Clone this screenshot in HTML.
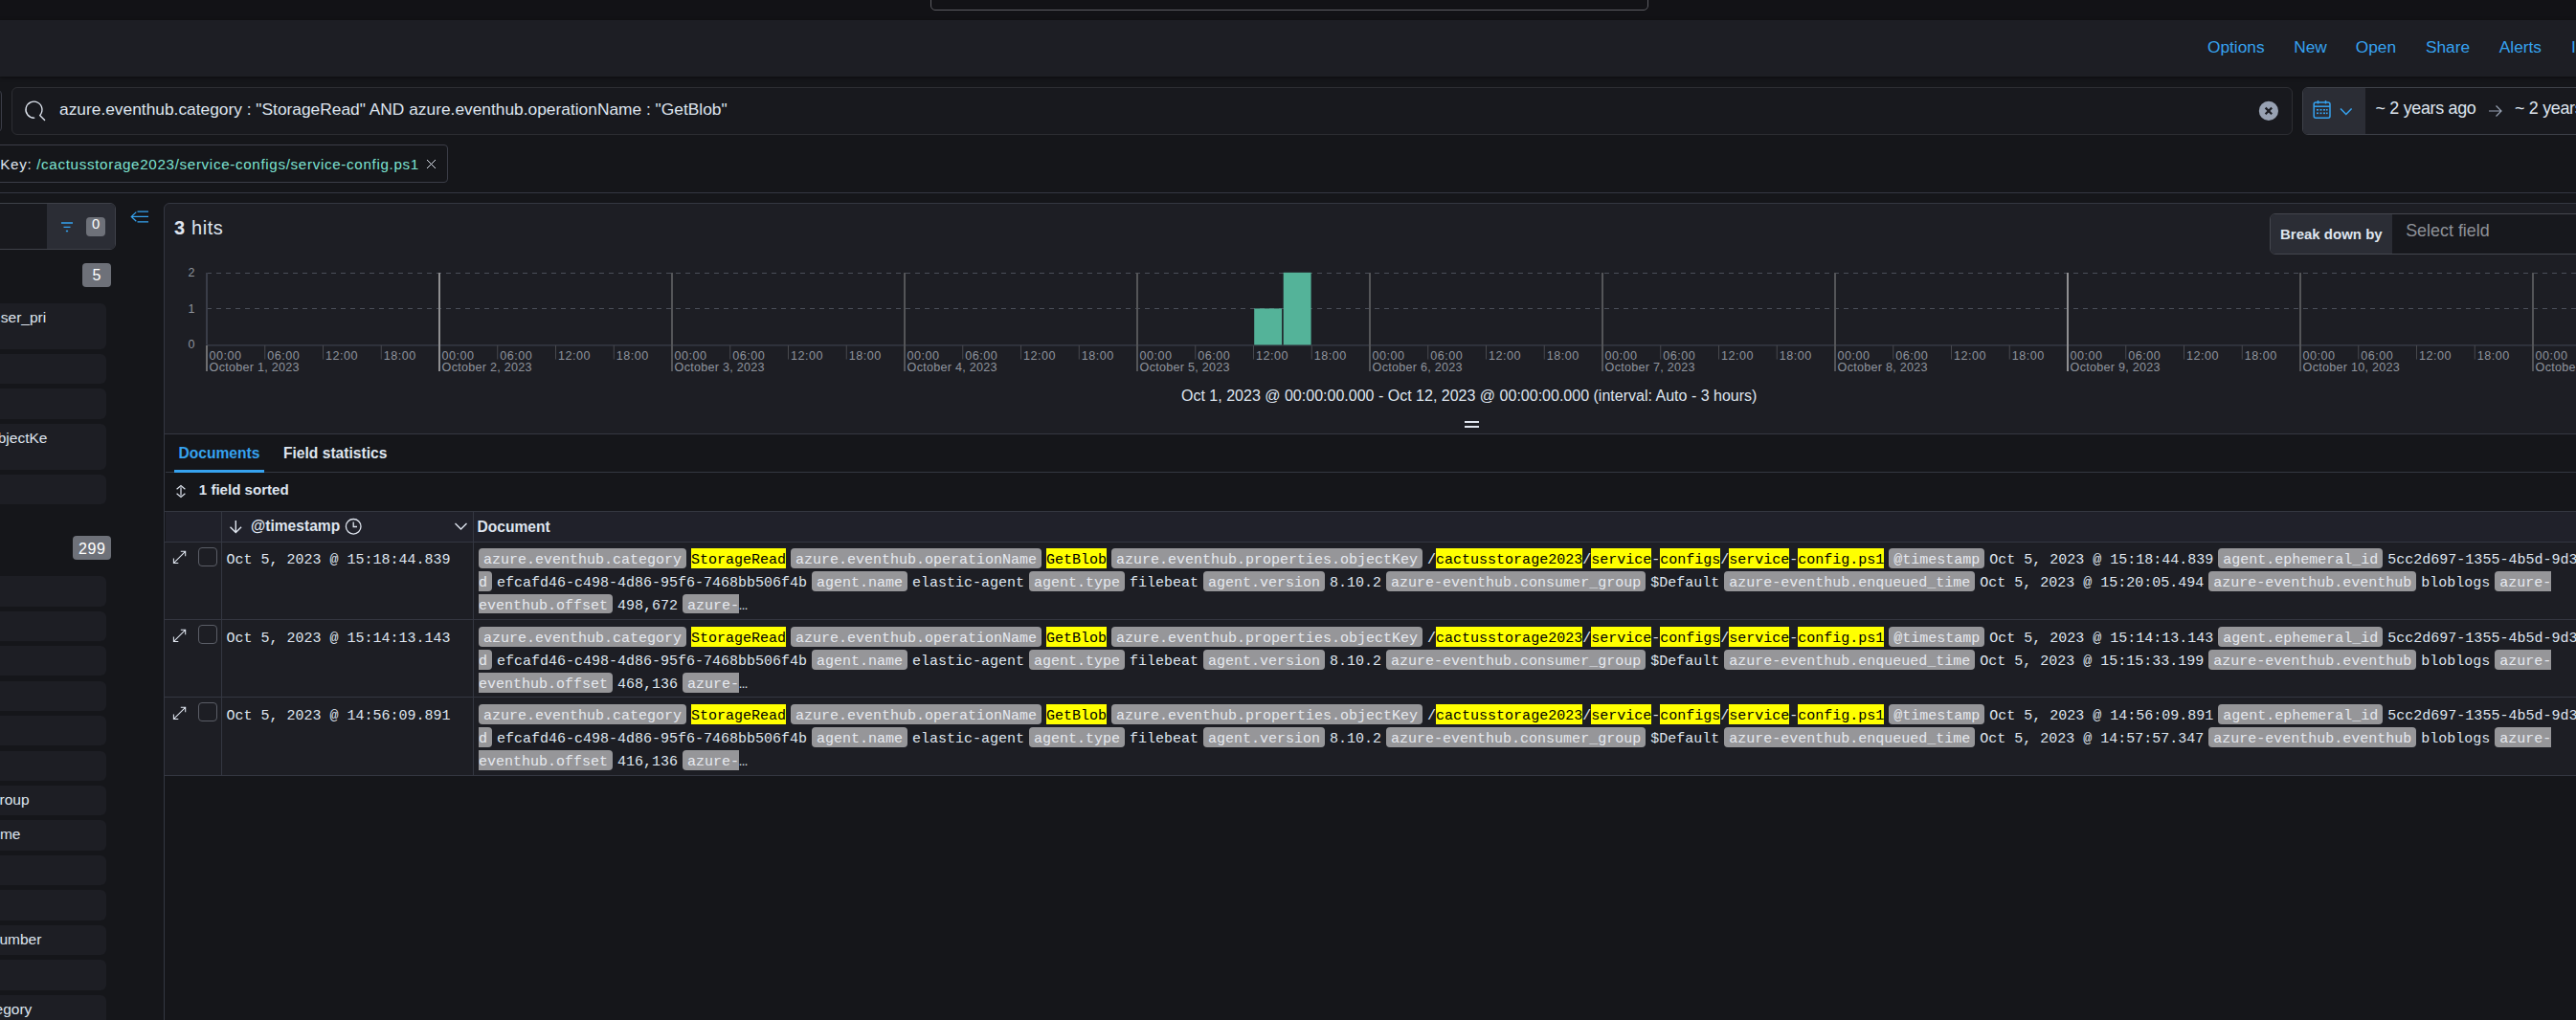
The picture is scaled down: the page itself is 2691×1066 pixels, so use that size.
<!DOCTYPE html>
<html><head><meta charset="utf-8"><style>
html,body{margin:0;padding:0;}
body{width:2691px;height:1066px;overflow:hidden;position:relative;background:#15161a;font-family:"Liberation Sans", sans-serif;color:#dfe5ef;}
.a{position:absolute;}
.t{white-space:nowrap;}
.doc{white-space:nowrap;font-family:"Liberation Mono", monospace;font-size:15px;line-height:25.4px;height:20.8px;color:#dfe5ef;}
.doc span{display:inline-block;height:20.8px;vertical-align:top;}
.doc .k{background:#969699;color:#e6e9ef;margin-right:5px;}
.doc .v{margin-right:5px;}
.doc .mk{background:#ffff00;color:#000;margin:0;}
</style></head><body>
<div class="a" style="left:0px;top:0px;width:2691px;height:21px;background:#121216;"></div><div class="a" style="left:972.0px;top:-20px;width:749.8px;height:31px;border:1.5px solid #5d5d62;box-sizing:border-box;border-radius:5px;"></div><div class="a" style="left:0px;top:21px;width:2691px;height:59.3px;background:#1d1e24;box-shadow:0 1px 4px rgba(0,0,0,0.45);"></div><div class="a t" style="top:40.86px;font-size:17.3px;line-height:17.3px;font-family:'Liberation Sans', sans-serif;font-weight:400;color:#36a2ef;left:2306.0px;">Options</div><div class="a t" style="top:40.86px;font-size:17.3px;line-height:17.3px;font-family:'Liberation Sans', sans-serif;font-weight:400;color:#36a2ef;left:2396.2px;">New</div><div class="a t" style="top:40.86px;font-size:17.3px;line-height:17.3px;font-family:'Liberation Sans', sans-serif;font-weight:400;color:#36a2ef;left:2460.8px;">Open</div><div class="a t" style="top:40.86px;font-size:17.3px;line-height:17.3px;font-family:'Liberation Sans', sans-serif;font-weight:400;color:#36a2ef;left:2533.9px;">Share</div><div class="a t" style="top:40.86px;font-size:17.3px;line-height:17.3px;font-family:'Liberation Sans', sans-serif;font-weight:400;color:#36a2ef;left:2610.8px;">Alerts</div><div class="a t" style="top:40.86px;font-size:17.3px;line-height:17.3px;font-family:'Liberation Sans', sans-serif;font-weight:400;color:#36a2ef;left:2686.0px;">I</div><div class="a" style="left:-100px;top:92.5px;width:101.5px;height:46.5px;border:1px solid #3b3d47;box-sizing:border-box;border-radius:6px;"></div><div class="a" style="left:12.2px;top:91.3px;width:2382.5px;height:49.6px;background:#18191e;border:1px solid #2d2e33;box-sizing:border-box;border-radius:6px;"></div><svg class="a" style="left:25px;top:104px" width="26" height="26" viewBox="0 0 26 26"><path d="M16.6 16.6 A8.5 8.5 0 1 0 10.7 19.2 M16.6 16.6 L21.6 21.5" stroke="#dfe5ef" stroke-width="1.35" stroke-linecap="round" fill="none"/></svg><div class="a t" style="top:106.41px;font-size:17.35px;line-height:17.35px;font-family:'Liberation Sans', sans-serif;font-weight:400;color:#dfe5ef;left:62px;">azure.eventhub.category : "StorageRead" AND azure.eventhub.operationName : "GetBlob"</div><svg class="a" style="left:2359px;top:105px" width="22" height="22" viewBox="0 0 22 22"><circle cx="10.9" cy="10.9" r="10.1" fill="#98a2b3"/><path d="M7.6 7.6 L14.2 14.2 M14.2 7.6 L7.6 14.2" stroke="#1d1e24" stroke-width="2.2" fill="none"/></svg><div class="a" style="left:2405.3px;top:91.0px;width:400px;height:49.8px;background:#18191e;border:1px solid #3e4149;box-sizing:border-box;border-radius:6px;"></div><div class="a" style="left:2406.3px;top:92.0px;width:64.4px;height:47.8px;background:#2b2d35;border-radius:5px 0 0 5px;"></div><svg class="a" style="left:2416px;top:104px" width="20" height="21" viewBox="0 0 20 21"><rect x="1.2" y="3" width="16.8" height="16.2" rx="2" fill="none" stroke="#36a2ef" stroke-width="1.5"/><path d="M1.2 7.2 H18" stroke="#36a2ef" stroke-width="1.5"/><path d="M5.5 1 V4.5 M13.5 1 V4.5" stroke="#36a2ef" stroke-width="1.5"/><g fill="#36a2ef"><rect x="4" y="10" width="2" height="1.6"/><rect x="7.5" y="10" width="2" height="1.6"/><rect x="11" y="10" width="2" height="1.6"/><rect x="14" y="10" width="1.6" height="1.6"/><rect x="4" y="13.5" width="2" height="1.6"/><rect x="7.5" y="13.5" width="2" height="1.6"/><rect x="11" y="13.5" width="2" height="1.6"/><rect x="14" y="13.5" width="1.6" height="1.6"/></g></svg><svg class="a" style="left:2444px;top:112px" width="14" height="9" viewBox="0 0 14 9"><path d="M1 1.5 L6.8 7.5 L12.6 1.5" stroke="#36a2ef" stroke-width="1.5" fill="none"/></svg><div class="a t" style="top:105.15px;font-size:17.9px;line-height:17.9px;font-family:'Liberation Sans', sans-serif;font-weight:400;color:#dfe5ef;left:2481.5px;letter-spacing:-0.3px;">~ 2 years ago</div><svg class="a" style="left:2599px;top:109px" width="16" height="14" viewBox="0 0 16 14"><path d="M1 7 H14 M8.5 1.5 L14 7 L8.5 12.5" stroke="#98a2b3" stroke-width="1.2" fill="none"/></svg><div class="a t" style="top:105.15px;font-size:17.9px;line-height:17.9px;font-family:'Liberation Sans', sans-serif;font-weight:400;color:#dfe5ef;left:2627px;letter-spacing:-0.3px;">~ 2 years ago</div><div class="a" style="left:-200px;top:151.0px;width:668.3px;height:40.0px;border:1px solid #3b3d47;box-sizing:border-box;border-radius:4px;"></div><div class="a t" style="left:0.3px;top:164.13px;font-size:15.2px;line-height:15.2px;letter-spacing:0.66px;color:#dfe5ef">Key: <span style="color:#7de2d1">/cactusstorage2023/service-configs/service-config.ps1</span></div><svg class="a" style="left:444px;top:165px" width="13" height="13" viewBox="0 0 13 13"><path d="M2 2 L11 11 M11 2 L2 11" stroke="#dfe5ef" stroke-width="1.0" fill="none"/></svg><div class="a" style="left:0px;top:201px;width:2691px;height:1px;background:#343741;"></div><div class="a" style="left:-100px;top:212.4px;width:221px;height:49.1px;background:#18191e;border:1px solid #3e4149;box-sizing:border-box;border-radius:6px;"></div><div class="a" style="left:49.4px;top:213.4px;width:70.5px;height:47.1px;background:#2b2d35;border-radius:0 5px 5px 0;"></div><svg class="a" style="left:63px;top:231px" width="14" height="12" viewBox="0 0 14 12"><path d="M1 2 H13 M3.5 6.3 H10.5 M5.9 10.5 H8.1" stroke="#36a2ef" stroke-width="1.3" fill="none"/></svg><div class="a t" style="left:90px;top:227px;width:20px;height:20px;background:#6e7179;border-radius:4px;text-align:center;line-height:15.5px;font-size:14.8px;color:#fff">0</div><div class="a t" style="left:86px;top:275px;width:30px;height:25px;background:#6e7179;border-radius:4px;text-align:center;line-height:26.0px;font-size:16px;letter-spacing:0px;text-indent:0px;color:#fff">5</div><div class="a t" style="left:76.2px;top:560.3px;width:39.5px;height:24.7px;background:#6e7179;border-radius:4px;text-align:center;line-height:27.7px;font-size:16px;letter-spacing:0.7px;text-indent:0.7px;color:#fff">299</div><div class="a" style="left:-100px;top:316.5px;width:210.8px;height:48.2px;background:#1d1e24;border-radius:6px;"></div><div class="a t" style="top:324.48px;font-size:15.5px;line-height:15.5px;font-family:'Liberation Sans', sans-serif;font-weight:400;color:#dfe5ef;right:2642.8px;">ser_pri</div><div class="a" style="left:-100px;top:369.6px;width:210.8px;height:31.4px;background:#1d1e24;border-radius:6px;"></div><div class="a" style="left:-100px;top:405.9px;width:210.8px;height:32.1px;background:#1d1e24;border-radius:6px;"></div><div class="a" style="left:-100px;top:443px;width:210.8px;height:47.7px;background:#1d1e24;border-radius:6px;"></div><div class="a t" style="top:450.28px;font-size:15.5px;line-height:15.5px;font-family:'Liberation Sans', sans-serif;font-weight:400;color:#dfe5ef;right:2641.6px;">objectKe</div><div class="a" style="left:-100px;top:495.6px;width:210.8px;height:31.4px;background:#1d1e24;border-radius:6px;"></div><div class="a" style="left:-100px;top:602.3px;width:210.8px;height:31.3px;background:#1d1e24;border-radius:6px;"></div><div class="a" style="left:-100px;top:638.75px;width:210.8px;height:31.3px;background:#1d1e24;border-radius:6px;"></div><div class="a" style="left:-100px;top:675.1999999999999px;width:210.8px;height:31.3px;background:#1d1e24;border-radius:6px;"></div><div class="a" style="left:-100px;top:711.65px;width:210.8px;height:31.3px;background:#1d1e24;border-radius:6px;"></div><div class="a" style="left:-100px;top:748.0999999999999px;width:210.8px;height:31.3px;background:#1d1e24;border-radius:6px;"></div><div class="a" style="left:-100px;top:784.55px;width:210.8px;height:31.3px;background:#1d1e24;border-radius:6px;"></div><div class="a" style="left:-100px;top:821.0px;width:210.8px;height:31.3px;background:#1d1e24;border-radius:6px;"></div><div class="a t" style="top:827.83px;font-size:15.5px;line-height:15.5px;font-family:'Liberation Sans', sans-serif;font-weight:400;color:#dfe5ef;right:2660.4px;">roup</div><div class="a" style="left:-100px;top:857.45px;width:210.8px;height:31.3px;background:#1d1e24;border-radius:6px;"></div><div class="a t" style="top:864.28px;font-size:15.5px;line-height:15.5px;font-family:'Liberation Sans', sans-serif;font-weight:400;color:#dfe5ef;right:2669.5px;">me</div><div class="a" style="left:-100px;top:893.9px;width:210.8px;height:31.3px;background:#1d1e24;border-radius:6px;"></div><div class="a" style="left:-100px;top:930.3499999999999px;width:210.8px;height:31.3px;background:#1d1e24;border-radius:6px;"></div><div class="a" style="left:-100px;top:966.8px;width:210.8px;height:31.3px;background:#1d1e24;border-radius:6px;"></div><div class="a t" style="top:973.63px;font-size:15.5px;line-height:15.5px;font-family:'Liberation Sans', sans-serif;font-weight:400;color:#dfe5ef;right:2647.6px;">umber</div><div class="a" style="left:-100px;top:1003.25px;width:210.8px;height:31.3px;background:#1d1e24;border-radius:6px;"></div><div class="a" style="left:-100px;top:1039.7px;width:210.8px;height:31.3px;background:#1d1e24;border-radius:6px;"></div><div class="a t" style="top:1046.53px;font-size:15.5px;line-height:15.5px;font-family:'Liberation Sans', sans-serif;font-weight:400;color:#dfe5ef;right:2657.7px;">egory</div><svg class="a" style="left:135px;top:219px" width="22" height="15" viewBox="0 0 22 15"><path d="M8.5 2 H20 M2.3 7.4 H20 M8.5 12.8 H20 M7.3 2.6 L2.3 7.4 L7.3 12.2" stroke="#36a2ef" stroke-width="1.25" fill="none"/></svg><div class="a" style="left:170.8px;top:212.4px;width:2600px;height:241.6px;background:#1d1e24;border:1px solid #343741;box-sizing:border-box;border-radius:6px 0 0 0;"></div><div class="a t" style="left:182px;top:228.37px;font-size:20px;line-height:20px;color:#dfe5ef"><b style="margin-right:1.3px">3</b> <span style="letter-spacing:0.55px">hits</span></div><div class="a" style="left:2371.3px;top:223.4px;width:400px;height:42.9px;background:#17181d;border:1px solid #44464e;box-sizing:border-box;border-radius:6px;"></div><div class="a" style="left:2372.3px;top:224.4px;width:126.5px;height:40.9px;background:#2b2d35;border-radius:5px 0 0 5px;"></div><div class="a t" style="top:237.20px;font-size:15px;line-height:15px;font-family:'Liberation Sans', sans-serif;font-weight:700;color:#dfe5ef;left:2382px;">Break down by</div><div class="a t" style="top:233.15px;font-size:17.9px;line-height:17.9px;font-family:'Liberation Sans', sans-serif;font-weight:400;color:#8e9198;left:2513.2px;">Select field</div><svg class="a" style="left:0;top:0" width="2691" height="460" viewBox="0 0 2691 460"><path d="M216 285.5 H2691" stroke="#4a4e59" stroke-width="1" stroke-dasharray="5 5"/><path d="M216 322.5 H2691" stroke="#4a4e59" stroke-width="1" stroke-dasharray="5 5"/><path d="M216 360.8 H2691" stroke="#3b3f4a" stroke-width="1.2"/><rect x="215" y="285" width="2" height="75.5" fill="#3a3d48"/><rect x="215" y="361" width="2" height="27" fill="#6e6e70"/><rect x="276.25" y="361" width="1" height="14.5" fill="#47484d"/><rect x="337.00" y="361" width="1" height="14.5" fill="#47484d"/><rect x="397.75" y="361" width="1" height="14.5" fill="#47484d"/><rect x="458" y="285" width="2" height="103" fill="#8f8f91"/><rect x="519.25" y="361" width="1" height="14.5" fill="#47484d"/><rect x="580.00" y="361" width="1" height="14.5" fill="#47484d"/><rect x="640.75" y="361" width="1" height="14.5" fill="#47484d"/><rect x="701" y="285" width="2" height="103" fill="#545558"/><rect x="762.25" y="361" width="1" height="14.5" fill="#47484d"/><rect x="823.00" y="361" width="1" height="14.5" fill="#47484d"/><rect x="883.75" y="361" width="1" height="14.5" fill="#47484d"/><rect x="944" y="285" width="2" height="103" fill="#545558"/><rect x="1005.25" y="361" width="1" height="14.5" fill="#47484d"/><rect x="1066.00" y="361" width="1" height="14.5" fill="#47484d"/><rect x="1126.75" y="361" width="1" height="14.5" fill="#47484d"/><rect x="1187" y="285" width="2" height="103" fill="#545558"/><rect x="1248.25" y="361" width="1" height="14.5" fill="#47484d"/><rect x="1309.00" y="361" width="1" height="14.5" fill="#47484d"/><rect x="1369.75" y="361" width="1" height="14.5" fill="#47484d"/><rect x="1430" y="285" width="2" height="103" fill="#545558"/><rect x="1491.25" y="361" width="1" height="14.5" fill="#47484d"/><rect x="1552.00" y="361" width="1" height="14.5" fill="#47484d"/><rect x="1612.75" y="361" width="1" height="14.5" fill="#47484d"/><rect x="1673" y="285" width="2" height="103" fill="#545558"/><rect x="1734.25" y="361" width="1" height="14.5" fill="#47484d"/><rect x="1795.00" y="361" width="1" height="14.5" fill="#47484d"/><rect x="1855.75" y="361" width="1" height="14.5" fill="#47484d"/><rect x="1916" y="285" width="2" height="103" fill="#545558"/><rect x="1977.25" y="361" width="1" height="14.5" fill="#47484d"/><rect x="2038.00" y="361" width="1" height="14.5" fill="#47484d"/><rect x="2098.75" y="361" width="1" height="14.5" fill="#47484d"/><rect x="2159" y="285" width="2" height="103" fill="#8f8f91"/><rect x="2220.25" y="361" width="1" height="14.5" fill="#47484d"/><rect x="2281.00" y="361" width="1" height="14.5" fill="#47484d"/><rect x="2341.75" y="361" width="1" height="14.5" fill="#47484d"/><rect x="2402" y="285" width="2" height="103" fill="#545558"/><rect x="2463.25" y="361" width="1" height="14.5" fill="#47484d"/><rect x="2524.00" y="361" width="1" height="14.5" fill="#47484d"/><rect x="2584.75" y="361" width="1" height="14.5" fill="#47484d"/><rect x="2645" y="285" width="2" height="103" fill="#545558"/><rect x="2706.25" y="361" width="1" height="14.5" fill="#47484d"/><rect x="2767.00" y="361" width="1" height="14.5" fill="#47484d"/><rect x="2827.75" y="361" width="1" height="14.5" fill="#47484d"/><rect x="1310.2" y="322.4" width="28.9" height="38" fill="#54b399"/><rect x="1340.7" y="284.8" width="28.9" height="75.6" fill="#54b399"/></svg><div class="a t" style="top:279.42px;font-size:12.5px;line-height:12.5px;font-family:'Liberation Sans', sans-serif;font-weight:400;color:#8f949e;right:2487.5px;">2</div><div class="a t" style="top:316.72px;font-size:12.5px;line-height:12.5px;font-family:'Liberation Sans', sans-serif;font-weight:400;color:#8f949e;right:2487.5px;">1</div><div class="a t" style="top:354.12px;font-size:12.5px;line-height:12.5px;font-family:'Liberation Sans', sans-serif;font-weight:400;color:#8f949e;right:2487.5px;">0</div><div class="a t" style="top:366.33px;font-size:12.6px;line-height:12.6px;font-family:'Liberation Sans', sans-serif;font-weight:400;color:#8f949e;left:218.6px;letter-spacing:0.47px;">00:00</div><div class="a t" style="top:366.33px;font-size:12.6px;line-height:12.6px;font-family:'Liberation Sans', sans-serif;font-weight:400;color:#8f949e;left:279.35px;letter-spacing:0.47px;">06:00</div><div class="a t" style="top:366.33px;font-size:12.6px;line-height:12.6px;font-family:'Liberation Sans', sans-serif;font-weight:400;color:#8f949e;left:340.1px;letter-spacing:0.47px;">12:00</div><div class="a t" style="top:366.33px;font-size:12.6px;line-height:12.6px;font-family:'Liberation Sans', sans-serif;font-weight:400;color:#8f949e;left:400.85px;letter-spacing:0.47px;">18:00</div><div class="a t" style="top:377.73px;font-size:12.6px;line-height:12.6px;font-family:'Liberation Sans', sans-serif;font-weight:400;color:#8f949e;left:218.6px;letter-spacing:0.26px;">October 1, 2023</div><div class="a t" style="top:366.33px;font-size:12.6px;line-height:12.6px;font-family:'Liberation Sans', sans-serif;font-weight:400;color:#8f949e;left:461.6px;letter-spacing:0.47px;">00:00</div><div class="a t" style="top:366.33px;font-size:12.6px;line-height:12.6px;font-family:'Liberation Sans', sans-serif;font-weight:400;color:#8f949e;left:522.35px;letter-spacing:0.47px;">06:00</div><div class="a t" style="top:366.33px;font-size:12.6px;line-height:12.6px;font-family:'Liberation Sans', sans-serif;font-weight:400;color:#8f949e;left:583.1px;letter-spacing:0.47px;">12:00</div><div class="a t" style="top:366.33px;font-size:12.6px;line-height:12.6px;font-family:'Liberation Sans', sans-serif;font-weight:400;color:#8f949e;left:643.85px;letter-spacing:0.47px;">18:00</div><div class="a t" style="top:377.73px;font-size:12.6px;line-height:12.6px;font-family:'Liberation Sans', sans-serif;font-weight:400;color:#8f949e;left:461.6px;letter-spacing:0.26px;">October 2, 2023</div><div class="a t" style="top:366.33px;font-size:12.6px;line-height:12.6px;font-family:'Liberation Sans', sans-serif;font-weight:400;color:#8f949e;left:704.6px;letter-spacing:0.47px;">00:00</div><div class="a t" style="top:366.33px;font-size:12.6px;line-height:12.6px;font-family:'Liberation Sans', sans-serif;font-weight:400;color:#8f949e;left:765.35px;letter-spacing:0.47px;">06:00</div><div class="a t" style="top:366.33px;font-size:12.6px;line-height:12.6px;font-family:'Liberation Sans', sans-serif;font-weight:400;color:#8f949e;left:826.1px;letter-spacing:0.47px;">12:00</div><div class="a t" style="top:366.33px;font-size:12.6px;line-height:12.6px;font-family:'Liberation Sans', sans-serif;font-weight:400;color:#8f949e;left:886.85px;letter-spacing:0.47px;">18:00</div><div class="a t" style="top:377.73px;font-size:12.6px;line-height:12.6px;font-family:'Liberation Sans', sans-serif;font-weight:400;color:#8f949e;left:704.6px;letter-spacing:0.26px;">October 3, 2023</div><div class="a t" style="top:366.33px;font-size:12.6px;line-height:12.6px;font-family:'Liberation Sans', sans-serif;font-weight:400;color:#8f949e;left:947.6px;letter-spacing:0.47px;">00:00</div><div class="a t" style="top:366.33px;font-size:12.6px;line-height:12.6px;font-family:'Liberation Sans', sans-serif;font-weight:400;color:#8f949e;left:1008.35px;letter-spacing:0.47px;">06:00</div><div class="a t" style="top:366.33px;font-size:12.6px;line-height:12.6px;font-family:'Liberation Sans', sans-serif;font-weight:400;color:#8f949e;left:1069.1px;letter-spacing:0.47px;">12:00</div><div class="a t" style="top:366.33px;font-size:12.6px;line-height:12.6px;font-family:'Liberation Sans', sans-serif;font-weight:400;color:#8f949e;left:1129.85px;letter-spacing:0.47px;">18:00</div><div class="a t" style="top:377.73px;font-size:12.6px;line-height:12.6px;font-family:'Liberation Sans', sans-serif;font-weight:400;color:#8f949e;left:947.6px;letter-spacing:0.26px;">October 4, 2023</div><div class="a t" style="top:366.33px;font-size:12.6px;line-height:12.6px;font-family:'Liberation Sans', sans-serif;font-weight:400;color:#8f949e;left:1190.6px;letter-spacing:0.47px;">00:00</div><div class="a t" style="top:366.33px;font-size:12.6px;line-height:12.6px;font-family:'Liberation Sans', sans-serif;font-weight:400;color:#8f949e;left:1251.35px;letter-spacing:0.47px;">06:00</div><div class="a t" style="top:366.33px;font-size:12.6px;line-height:12.6px;font-family:'Liberation Sans', sans-serif;font-weight:400;color:#8f949e;left:1312.1px;letter-spacing:0.47px;">12:00</div><div class="a t" style="top:366.33px;font-size:12.6px;line-height:12.6px;font-family:'Liberation Sans', sans-serif;font-weight:400;color:#8f949e;left:1372.85px;letter-spacing:0.47px;">18:00</div><div class="a t" style="top:377.73px;font-size:12.6px;line-height:12.6px;font-family:'Liberation Sans', sans-serif;font-weight:400;color:#8f949e;left:1190.6px;letter-spacing:0.26px;">October 5, 2023</div><div class="a t" style="top:366.33px;font-size:12.6px;line-height:12.6px;font-family:'Liberation Sans', sans-serif;font-weight:400;color:#8f949e;left:1433.6px;letter-spacing:0.47px;">00:00</div><div class="a t" style="top:366.33px;font-size:12.6px;line-height:12.6px;font-family:'Liberation Sans', sans-serif;font-weight:400;color:#8f949e;left:1494.35px;letter-spacing:0.47px;">06:00</div><div class="a t" style="top:366.33px;font-size:12.6px;line-height:12.6px;font-family:'Liberation Sans', sans-serif;font-weight:400;color:#8f949e;left:1555.1px;letter-spacing:0.47px;">12:00</div><div class="a t" style="top:366.33px;font-size:12.6px;line-height:12.6px;font-family:'Liberation Sans', sans-serif;font-weight:400;color:#8f949e;left:1615.85px;letter-spacing:0.47px;">18:00</div><div class="a t" style="top:377.73px;font-size:12.6px;line-height:12.6px;font-family:'Liberation Sans', sans-serif;font-weight:400;color:#8f949e;left:1433.6px;letter-spacing:0.26px;">October 6, 2023</div><div class="a t" style="top:366.33px;font-size:12.6px;line-height:12.6px;font-family:'Liberation Sans', sans-serif;font-weight:400;color:#8f949e;left:1676.6px;letter-spacing:0.47px;">00:00</div><div class="a t" style="top:366.33px;font-size:12.6px;line-height:12.6px;font-family:'Liberation Sans', sans-serif;font-weight:400;color:#8f949e;left:1737.35px;letter-spacing:0.47px;">06:00</div><div class="a t" style="top:366.33px;font-size:12.6px;line-height:12.6px;font-family:'Liberation Sans', sans-serif;font-weight:400;color:#8f949e;left:1798.1px;letter-spacing:0.47px;">12:00</div><div class="a t" style="top:366.33px;font-size:12.6px;line-height:12.6px;font-family:'Liberation Sans', sans-serif;font-weight:400;color:#8f949e;left:1858.85px;letter-spacing:0.47px;">18:00</div><div class="a t" style="top:377.73px;font-size:12.6px;line-height:12.6px;font-family:'Liberation Sans', sans-serif;font-weight:400;color:#8f949e;left:1676.6px;letter-spacing:0.26px;">October 7, 2023</div><div class="a t" style="top:366.33px;font-size:12.6px;line-height:12.6px;font-family:'Liberation Sans', sans-serif;font-weight:400;color:#8f949e;left:1919.6px;letter-spacing:0.47px;">00:00</div><div class="a t" style="top:366.33px;font-size:12.6px;line-height:12.6px;font-family:'Liberation Sans', sans-serif;font-weight:400;color:#8f949e;left:1980.35px;letter-spacing:0.47px;">06:00</div><div class="a t" style="top:366.33px;font-size:12.6px;line-height:12.6px;font-family:'Liberation Sans', sans-serif;font-weight:400;color:#8f949e;left:2041.1px;letter-spacing:0.47px;">12:00</div><div class="a t" style="top:366.33px;font-size:12.6px;line-height:12.6px;font-family:'Liberation Sans', sans-serif;font-weight:400;color:#8f949e;left:2101.85px;letter-spacing:0.47px;">18:00</div><div class="a t" style="top:377.73px;font-size:12.6px;line-height:12.6px;font-family:'Liberation Sans', sans-serif;font-weight:400;color:#8f949e;left:1919.6px;letter-spacing:0.26px;">October 8, 2023</div><div class="a t" style="top:366.33px;font-size:12.6px;line-height:12.6px;font-family:'Liberation Sans', sans-serif;font-weight:400;color:#8f949e;left:2162.6px;letter-spacing:0.47px;">00:00</div><div class="a t" style="top:366.33px;font-size:12.6px;line-height:12.6px;font-family:'Liberation Sans', sans-serif;font-weight:400;color:#8f949e;left:2223.35px;letter-spacing:0.47px;">06:00</div><div class="a t" style="top:366.33px;font-size:12.6px;line-height:12.6px;font-family:'Liberation Sans', sans-serif;font-weight:400;color:#8f949e;left:2284.1px;letter-spacing:0.47px;">12:00</div><div class="a t" style="top:366.33px;font-size:12.6px;line-height:12.6px;font-family:'Liberation Sans', sans-serif;font-weight:400;color:#8f949e;left:2344.85px;letter-spacing:0.47px;">18:00</div><div class="a t" style="top:377.73px;font-size:12.6px;line-height:12.6px;font-family:'Liberation Sans', sans-serif;font-weight:400;color:#8f949e;left:2162.6px;letter-spacing:0.26px;">October 9, 2023</div><div class="a t" style="top:366.33px;font-size:12.6px;line-height:12.6px;font-family:'Liberation Sans', sans-serif;font-weight:400;color:#8f949e;left:2405.6px;letter-spacing:0.47px;">00:00</div><div class="a t" style="top:366.33px;font-size:12.6px;line-height:12.6px;font-family:'Liberation Sans', sans-serif;font-weight:400;color:#8f949e;left:2466.35px;letter-spacing:0.47px;">06:00</div><div class="a t" style="top:366.33px;font-size:12.6px;line-height:12.6px;font-family:'Liberation Sans', sans-serif;font-weight:400;color:#8f949e;left:2527.1px;letter-spacing:0.47px;">12:00</div><div class="a t" style="top:366.33px;font-size:12.6px;line-height:12.6px;font-family:'Liberation Sans', sans-serif;font-weight:400;color:#8f949e;left:2587.85px;letter-spacing:0.47px;">18:00</div><div class="a t" style="top:377.73px;font-size:12.6px;line-height:12.6px;font-family:'Liberation Sans', sans-serif;font-weight:400;color:#8f949e;left:2405.6px;letter-spacing:0.26px;">October 10, 2023</div><div class="a t" style="top:366.33px;font-size:12.6px;line-height:12.6px;font-family:'Liberation Sans', sans-serif;font-weight:400;color:#8f949e;left:2648.6px;letter-spacing:0.47px;">00:00</div><div class="a t" style="top:366.33px;font-size:12.6px;line-height:12.6px;font-family:'Liberation Sans', sans-serif;font-weight:400;color:#8f949e;left:2709.35px;letter-spacing:0.47px;">06:00</div><div class="a t" style="top:366.33px;font-size:12.6px;line-height:12.6px;font-family:'Liberation Sans', sans-serif;font-weight:400;color:#8f949e;left:2770.1px;letter-spacing:0.47px;">12:00</div><div class="a t" style="top:366.33px;font-size:12.6px;line-height:12.6px;font-family:'Liberation Sans', sans-serif;font-weight:400;color:#8f949e;left:2830.85px;letter-spacing:0.47px;">18:00</div><div class="a t" style="top:377.73px;font-size:12.6px;line-height:12.6px;font-family:'Liberation Sans', sans-serif;font-weight:400;color:#8f949e;left:2648.6px;letter-spacing:0.26px;">October 11, 2023</div><div class="a t" style="top:404.83px;font-size:16.03px;line-height:16.03px;font-family:'Liberation Sans', sans-serif;font-weight:400;color:#dfe5ef;left:1234px;">Oct 1, 2023 @ 00:00:00.000 - Oct 12, 2023 @ 00:00:00.000 (interval: Auto - 3 hours)</div><div class="a" style="left:1530px;top:440px;width:15px;height:1.6px;background:#dfe5ef;"></div><div class="a" style="left:1530px;top:445px;width:15px;height:1.6px;background:#dfe5ef;"></div><div class="a" style="left:170.8px;top:453.3px;width:1px;height:612.7px;background:#343741;"></div><div class="a t" style="top:465.99px;font-size:15.6px;line-height:15.6px;font-family:'Liberation Sans', sans-serif;font-weight:700;color:#36a2ef;left:186.5px;">Documents</div><div class="a t" style="top:465.99px;font-size:15.6px;line-height:15.6px;font-family:'Liberation Sans', sans-serif;font-weight:700;color:#dfe5ef;left:296px;">Field statistics</div><div class="a" style="left:172.7px;top:493px;width:2691px;height:1px;background:#343741;"></div><div class="a" style="left:181.7px;top:491.2px;width:94.5px;height:3px;background:#36a2ef;"></div><svg class="a" style="left:182px;top:506px" width="14" height="15" viewBox="0 0 14 15"><path d="M2.6 5.2 L7 1.6 L11.4 5.2 M2.6 9.8 L7 13.4 L11.4 9.8 M7 3.2 V11.8" stroke="#dfe5ef" stroke-width="1.2" fill="none"/></svg><div class="a t" style="top:504.22px;font-size:15.1px;line-height:15.1px;font-family:'Liberation Sans', sans-serif;font-weight:700;color:#dfe5ef;left:207.8px;">1 field sorted</div><div class="a" style="left:172.7px;top:534.5px;width:2691px;height:31.7px;background:#20212a;"></div><svg class="a" style="left:238px;top:543px" width="17" height="15" viewBox="0 0 17 15"><path d="M8.3 1 V13.5 M2.5 7.8 L8.3 13.6 L14.1 7.8" stroke="#dfe5ef" stroke-width="1.4" fill="none"/></svg><div class="a t" style="top:541.79px;font-size:15.6px;line-height:15.6px;font-family:'Liberation Sans', sans-serif;font-weight:700;color:#dfe5ef;left:262px;">@timestamp</div><svg class="a" style="left:360px;top:541px" width="19" height="19" viewBox="0 0 19 19"><circle cx="9.2" cy="9.3" r="7.8" fill="none" stroke="#dfe5ef" stroke-width="1.3"/><path d="M9.2 4.5 V9.5 H13" stroke="#dfe5ef" stroke-width="1.3" fill="none"/></svg><svg class="a" style="left:474px;top:545px" width="15" height="10" viewBox="0 0 15 10"><path d="M1.5 2 L7.5 8 L13.5 2" stroke="#dfe5ef" stroke-width="1.4" fill="none"/></svg><div class="a t" style="top:543.09px;font-size:15.6px;line-height:15.6px;font-family:'Liberation Sans', sans-serif;font-weight:700;color:#dfe5ef;left:498.5px;">Document</div><div class="a" style="left:171.8px;top:566.3px;width:2691px;height:81.10000000000002px;background:#1d1e24;"></div><svg class="a" style="left:180px;top:574.9px" width="16" height="15" viewBox="0 0 16 15"><path d="M1.5 13.4 L13.6 1.4 M8.8 1.3 H13.7 V6.2 M1.4 8.6 V13.5 H6.3" stroke="#dfe5ef" stroke-width="1.05" fill="none"/></svg><div class="a" style="left:207px;top:572.2px;width:20.2px;height:20.2px;border:1px solid #5a5d66;box-sizing:border-box;border-radius:4px;"></div><div class="a t" style="top:577.81px;font-size:15px;line-height:15px;font-family:'Liberation Mono', monospace;font-weight:400;color:#dfe5ef;left:236.5px;">Oct 5, 2023 @ 15:18:44.839</div><div class="a doc" style="left:499.9px;top:572.90px"><span class="k" style="padding:0 5px 0 5px;border-radius:4px 4px 4px 4px;">azure.eventhub.category</span><span class="v"><span class="mk">StorageRead</span></span><span class="k" style="padding:0 5px 0 5px;border-radius:4px 4px 4px 4px;">azure.eventhub.operationName</span><span class="v"><span class="mk">GetBlob</span></span><span class="k" style="padding:0 5px 0 5px;border-radius:4px 4px 4px 4px;">azure.eventhub.properties.objectKey</span><span class="v">/<span class="mk">cactusstorage2023</span>/<span class="mk">service</span>-<span class="mk">configs</span>/<span class="mk">service</span>-<span class="mk">config.ps1</span></span><span class="k" style="padding:0 5px 0 5px;border-radius:4px 4px 4px 4px;">@timestamp</span><span class="v">Oct 5, 2023 @ 15:18:44.839</span><span class="k" style="padding:0 5px 0 5px;border-radius:4px 4px 4px 4px;">agent.ephemeral_id</span><span class="v">5cc2d697-1355-4b5d-9d33-efcafd46c498</span></div><div class="a doc" style="left:499.9px;top:596.75px"><span class="k" style="padding:0 5px 0 0;border-radius:0 4px 4px 0;">d</span><span class="v">efcafd46-c498-4d86-95f6-7468bb506f4b</span><span class="k" style="padding:0 5px 0 5px;border-radius:4px 4px 4px 4px;">agent.name</span><span class="v">elastic-agent</span><span class="k" style="padding:0 5px 0 5px;border-radius:4px 4px 4px 4px;">agent.type</span><span class="v">filebeat</span><span class="k" style="padding:0 5px 0 5px;border-radius:4px 4px 4px 4px;">agent.version</span><span class="v">8.10.2</span><span class="k" style="padding:0 5px 0 5px;border-radius:4px 4px 4px 4px;">azure-eventhub.consumer_group</span><span class="v">$Default</span><span class="k" style="padding:0 5px 0 5px;border-radius:4px 4px 4px 4px;">azure-eventhub.enqueued_time</span><span class="v">Oct 5, 2023 @ 15:20:05.494</span><span class="k" style="padding:0 5px 0 5px;border-radius:4px 4px 4px 4px;">azure-eventhub.eventhub</span><span class="v">bloblogs</span><span class="k" style="padding:0 0 0 5px;border-radius:4px 0 0 4px;">azure-</span></div><div class="a doc" style="left:499.9px;top:620.60px"><span class="k" style="padding:0 5px 0 0;border-radius:0 4px 4px 0;">eventhub.offset</span><span class="v">498,672</span><span class="k" style="padding:0 0 0 5px;border-radius:4px 0 0 4px;margin-right:0">azure-</span>…</div><div class="a" style="left:171.8px;top:647.4px;width:2691px;height:80.80000000000007px;background:#1d1e24;"></div><svg class="a" style="left:180px;top:657.4px" width="16" height="15" viewBox="0 0 16 15"><path d="M1.5 13.4 L13.6 1.4 M8.8 1.3 H13.7 V6.2 M1.4 8.6 V13.5 H6.3" stroke="#dfe5ef" stroke-width="1.05" fill="none"/></svg><div class="a" style="left:207px;top:652.9px;width:20.2px;height:20.2px;border:1px solid #5a5d66;box-sizing:border-box;border-radius:4px;"></div><div class="a t" style="top:660.31px;font-size:15px;line-height:15px;font-family:'Liberation Mono', monospace;font-weight:400;color:#dfe5ef;left:236.5px;">Oct 5, 2023 @ 15:14:13.143</div><div class="a doc" style="left:499.9px;top:655.40px"><span class="k" style="padding:0 5px 0 5px;border-radius:4px 4px 4px 4px;">azure.eventhub.category</span><span class="v"><span class="mk">StorageRead</span></span><span class="k" style="padding:0 5px 0 5px;border-radius:4px 4px 4px 4px;">azure.eventhub.operationName</span><span class="v"><span class="mk">GetBlob</span></span><span class="k" style="padding:0 5px 0 5px;border-radius:4px 4px 4px 4px;">azure.eventhub.properties.objectKey</span><span class="v">/<span class="mk">cactusstorage2023</span>/<span class="mk">service</span>-<span class="mk">configs</span>/<span class="mk">service</span>-<span class="mk">config.ps1</span></span><span class="k" style="padding:0 5px 0 5px;border-radius:4px 4px 4px 4px;">@timestamp</span><span class="v">Oct 5, 2023 @ 15:14:13.143</span><span class="k" style="padding:0 5px 0 5px;border-radius:4px 4px 4px 4px;">agent.ephemeral_id</span><span class="v">5cc2d697-1355-4b5d-9d33-efcafd46c498</span></div><div class="a doc" style="left:499.9px;top:679.25px"><span class="k" style="padding:0 5px 0 0;border-radius:0 4px 4px 0;">d</span><span class="v">efcafd46-c498-4d86-95f6-7468bb506f4b</span><span class="k" style="padding:0 5px 0 5px;border-radius:4px 4px 4px 4px;">agent.name</span><span class="v">elastic-agent</span><span class="k" style="padding:0 5px 0 5px;border-radius:4px 4px 4px 4px;">agent.type</span><span class="v">filebeat</span><span class="k" style="padding:0 5px 0 5px;border-radius:4px 4px 4px 4px;">agent.version</span><span class="v">8.10.2</span><span class="k" style="padding:0 5px 0 5px;border-radius:4px 4px 4px 4px;">azure-eventhub.consumer_group</span><span class="v">$Default</span><span class="k" style="padding:0 5px 0 5px;border-radius:4px 4px 4px 4px;">azure-eventhub.enqueued_time</span><span class="v">Oct 5, 2023 @ 15:15:33.199</span><span class="k" style="padding:0 5px 0 5px;border-radius:4px 4px 4px 4px;">azure-eventhub.eventhub</span><span class="v">bloblogs</span><span class="k" style="padding:0 0 0 5px;border-radius:4px 0 0 4px;">azure-</span></div><div class="a doc" style="left:499.9px;top:703.10px"><span class="k" style="padding:0 5px 0 0;border-radius:0 4px 4px 0;">eventhub.offset</span><span class="v">468,136</span><span class="k" style="padding:0 0 0 5px;border-radius:4px 0 0 4px;margin-right:0">azure-</span>…</div><div class="a" style="left:171.8px;top:728.2px;width:2691px;height:82.09999999999991px;background:#1d1e24;"></div><svg class="a" style="left:180px;top:738.2px" width="16" height="15" viewBox="0 0 16 15"><path d="M1.5 13.4 L13.6 1.4 M8.8 1.3 H13.7 V6.2 M1.4 8.6 V13.5 H6.3" stroke="#dfe5ef" stroke-width="1.05" fill="none"/></svg><div class="a" style="left:207px;top:733.9px;width:20.2px;height:20.2px;border:1px solid #5a5d66;box-sizing:border-box;border-radius:4px;"></div><div class="a t" style="top:741.11px;font-size:15px;line-height:15px;font-family:'Liberation Mono', monospace;font-weight:400;color:#dfe5ef;left:236.5px;">Oct 5, 2023 @ 14:56:09.891</div><div class="a doc" style="left:499.9px;top:736.20px"><span class="k" style="padding:0 5px 0 5px;border-radius:4px 4px 4px 4px;">azure.eventhub.category</span><span class="v"><span class="mk">StorageRead</span></span><span class="k" style="padding:0 5px 0 5px;border-radius:4px 4px 4px 4px;">azure.eventhub.operationName</span><span class="v"><span class="mk">GetBlob</span></span><span class="k" style="padding:0 5px 0 5px;border-radius:4px 4px 4px 4px;">azure.eventhub.properties.objectKey</span><span class="v">/<span class="mk">cactusstorage2023</span>/<span class="mk">service</span>-<span class="mk">configs</span>/<span class="mk">service</span>-<span class="mk">config.ps1</span></span><span class="k" style="padding:0 5px 0 5px;border-radius:4px 4px 4px 4px;">@timestamp</span><span class="v">Oct 5, 2023 @ 14:56:09.891</span><span class="k" style="padding:0 5px 0 5px;border-radius:4px 4px 4px 4px;">agent.ephemeral_id</span><span class="v">5cc2d697-1355-4b5d-9d33-efcafd46c498</span></div><div class="a doc" style="left:499.9px;top:760.05px"><span class="k" style="padding:0 5px 0 0;border-radius:0 4px 4px 0;">d</span><span class="v">efcafd46-c498-4d86-95f6-7468bb506f4b</span><span class="k" style="padding:0 5px 0 5px;border-radius:4px 4px 4px 4px;">agent.name</span><span class="v">elastic-agent</span><span class="k" style="padding:0 5px 0 5px;border-radius:4px 4px 4px 4px;">agent.type</span><span class="v">filebeat</span><span class="k" style="padding:0 5px 0 5px;border-radius:4px 4px 4px 4px;">agent.version</span><span class="v">8.10.2</span><span class="k" style="padding:0 5px 0 5px;border-radius:4px 4px 4px 4px;">azure-eventhub.consumer_group</span><span class="v">$Default</span><span class="k" style="padding:0 5px 0 5px;border-radius:4px 4px 4px 4px;">azure-eventhub.enqueued_time</span><span class="v">Oct 5, 2023 @ 14:57:57.347</span><span class="k" style="padding:0 5px 0 5px;border-radius:4px 4px 4px 4px;">azure-eventhub.eventhub</span><span class="v">bloblogs</span><span class="k" style="padding:0 0 0 5px;border-radius:4px 0 0 4px;">azure-</span></div><div class="a doc" style="left:499.9px;top:783.90px"><span class="k" style="padding:0 5px 0 0;border-radius:0 4px 4px 0;">eventhub.offset</span><span class="v">416,136</span><span class="k" style="padding:0 0 0 5px;border-radius:4px 0 0 4px;margin-right:0">azure-</span>…</div><div class="a" style="left:171.8px;top:534.0px;width:2691px;height:1px;background:#343741;"></div><div class="a" style="left:171.8px;top:565.9px;width:2691px;height:1px;background:#343741;"></div><div class="a" style="left:171.8px;top:646.9px;width:2691px;height:1px;background:#343741;"></div><div class="a" style="left:171.8px;top:727.7px;width:2691px;height:1px;background:#343741;"></div><div class="a" style="left:171.8px;top:809.8px;width:2691px;height:1px;background:#343741;"></div><div class="a" style="left:230.8px;top:534.5px;width:1px;height:275.79999999999995px;background:#343741;"></div><div class="a" style="left:494.1px;top:534.5px;width:1px;height:275.79999999999995px;background:#343741;"></div>
</body></html>
